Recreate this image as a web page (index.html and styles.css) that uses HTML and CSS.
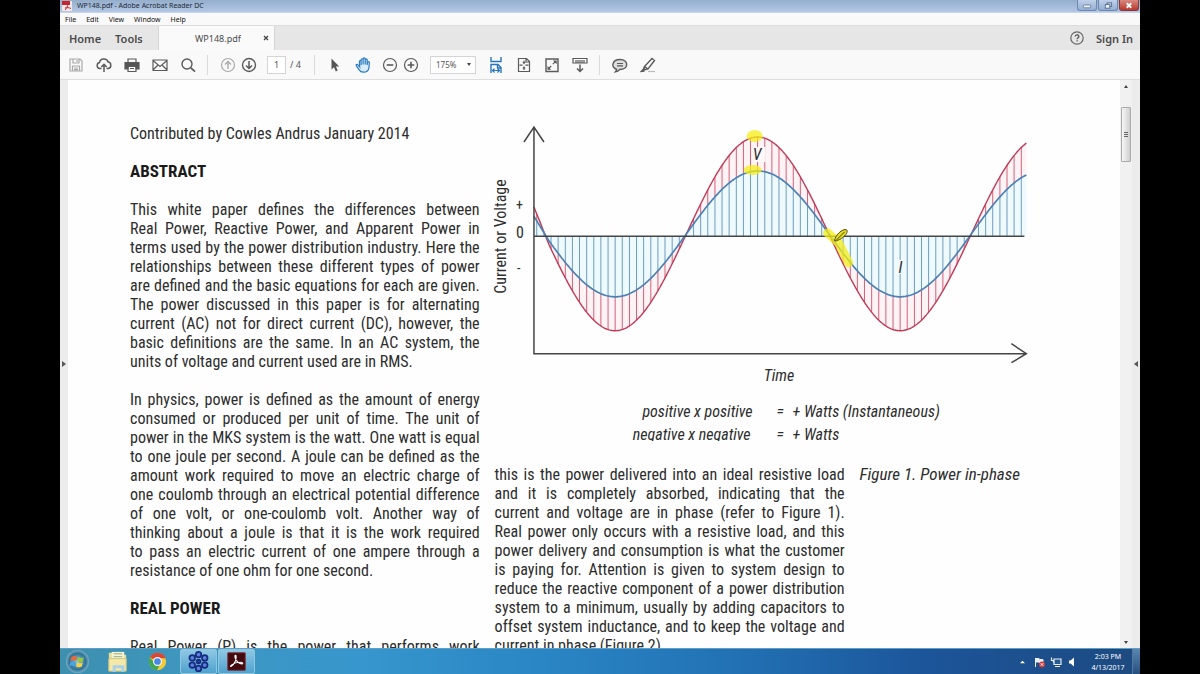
FILE: index.html
```html
<!DOCTYPE html>
<html lang="en">
<head>
<meta charset="utf-8">
<title>WP148.pdf - Adobe Acrobat Reader DC</title>
<link rel="stylesheet" href="styles.css">
</head>
<body>
<div class="screen">
  <header class="titlebar">
    <svg class="app-icon" viewBox="0 0 10 10"><rect width="10" height="10" rx="1" fill="#f3e9ea"/><path d="M0 0h8v4H0z" fill="#c5262c"/><path d="M3 9c2-2 3-4 2.500-6M3 7c2-.5 4-.5 6 .5" stroke="#c5262c" fill="none"/></svg>
    <span class="title">WP148.pdf - Adobe Acrobat Reader DC</span>
    <div class="win-buttons">
      <button class="win" aria-label="Minimize"><svg viewBox="0 0 20 10"><rect x="6" y="4.500" width="8" height="3" rx="1" fill="#eef4fb" stroke="#56698a" stroke-width=".8"/></svg></button>
      <button class="win" aria-label="Restore"><svg viewBox="0 0 20 10"><rect x="9" y="2" width="5" height="4" fill="#c9d8ee" stroke="#56698a"/><rect x="7" y="4" width="5" height="4" fill="#eef4fb" stroke="#56698a"/></svg></button>
      <button class="win win-close" aria-label="Close"><svg viewBox="0 0 20 10"><path d="M7.500 2.500l5 5M12.500 2.500l-5 5" stroke="#fff" stroke-width="2"/></svg></button>
    </div>
  </header>
  <nav class="menubar">
    <button>File</button><button>Edit</button><button>View</button><button>Window</button><button>Help</button>
  </nav>
  <div class="tabs">
    <div class="tabs-main"><button>Home</button><button>Tools</button></div>
    <div class="doc-tab"><button class="doc-name">WP148.pdf</button><button class="tab-close" aria-label="Close tab"><svg viewBox="0 0 6 6"><path d="M1 1l4 4M5 1L1 5" stroke="#444" stroke-width="1.300"/></svg></button></div>
    <div class="tabs-end">
      <button class="help" aria-label="Help"><svg viewBox="0 0 14 14"><circle cx="7" cy="7" r="6.200" fill="none" stroke="#666" stroke-width="1.200"/><path d="M5.200 5.600c0-2.400 3.700-2.400 3.700-.2 0 1.300-1.800 1.300-1.800 2.800M7.100 9.300v1.300" fill="none" stroke="#555" stroke-width="1.300"/></svg></button>
      <button>Sign In</button>
    </div>
  </div>
  <div class="toolbar">
    <button class="tool faded" aria-label="Save"><svg viewBox="0 0 16 16"><path d="M2 2h10l2 2v10H2zM5 2v4h6V2M4.500 14V9h7v5M6 11h4M6 12.700h4M9 3v2"/></svg></button>
    <button class="tool" aria-label="Upload"><svg viewBox="0 0 16 16"><path stroke-width="1.500" d="M5.500 11.500H3.800a3 3 0 0 1-.3-5.900c.6-4.500 7.600-4.800 8.600-.6 3.300 0 3.800 5.800.2 6.500H10.500M8 15V7.500M5.300 10L8 7.300l2.700 2.700"/></svg></button>
    <button class="tool" aria-label="Print"><svg viewBox="0 0 16 16"><path d="M1 5.500h14V12h-3V9.500H4V12H1z" fill="#555"/><path d="M4 5V2h8v3M4 9.500h8v5H4zM6 11.500h4"/></svg></button>
    <button class="tool" aria-label="Mail"><svg viewBox="0 0 16 16"><path d="M1 3h14v10.500H1zM1 3.500l7 6 7-6M1 13l5-5M15 13l-5-5"/></svg></button>
    <button class="tool" aria-label="Find"><svg viewBox="0 0 16 16"><circle cx="7" cy="7" r="5" stroke-width="1.400"/><path d="M10.800 10.800L15 14.700" stroke-width="1.800"/></svg></button>
    <span class="sep"></span>
    <button class="tool small faded" aria-label="Previous page"><svg viewBox="0 0 16 16"><circle cx="8" cy="8" r="6.500"/><path d="M8 12V4.500M5 7.500l3-3 3 3" stroke-width="1.400"/></svg></button>
    <button class="tool small" aria-label="Next page"><svg viewBox="0 0 16 16"><circle cx="8" cy="8" r="6.500" stroke-width="1.400"/><path d="M8 4v7.500M5 8.500l3 3 3-3" stroke-width="1.500"/></svg></button>
    <input class="page-no" type="text" value="1" aria-label="Page number"><span class="page-count">/ 4</span>
    <span class="sep sep-wide"></span>
    <button class="tool" aria-label="Select"><svg viewBox="0 0 16 16"><path d="M4.500 1.500v11l2.500-2.200 1.800 4.200 1.900-.9-1.800-4 3.300-.2z" fill="#555" stroke="none"/></svg></button>
    <button class="tool hand" aria-label="Hand"><svg viewBox="0 0 16 16"><path d="M4.700 10L3 7.800C2 6.800.6 7.600 1.400 8.900l2.900 4.300c1 1.500 2.200 2 4 2 3.700 0 5.400-1.500 5.700-5l.4-4.700c0-1.300-1.700-1.300-1.900 0L12.200 8V3c0-1.400-2-1.400-2 0v4.500V2c0-1.400-2.100-1.400-2.100 0v5.500V2.800c0-1.400-2-1.400-2 0V8 4.500c0-1.200-1.700-1.200-1.700 0z" fill="#d9ecfa"/></svg></button>
    <button class="tool small zoom-out" aria-label="Zoom out"><svg viewBox="0 0 16 16"><circle cx="8" cy="8" r="6.500"/><path d="M4.700 8h6.600" stroke-width="1.600"/></svg></button>
    <button class="tool small" aria-label="Zoom in"><svg viewBox="0 0 16 16"><circle cx="8" cy="8" r="6.500"/><path d="M4.700 8h6.600M8 4.700v6.600" stroke-width="1.600"/></svg></button>
    <label class="zoom"><select aria-label="Zoom level"><option>175%</option></select></label>
    <button class="tool blue" aria-label="Fit width"><svg viewBox="0 0 16 16"><path stroke-width="1.400" d="M3 0v4.500h10V0M3 16V7.500h7l3 3V16M9.500 7.500v3.500H13"/><path stroke-width="1.200" d="M4.500 13.500h7M6.500 11.500l-2 2 2 2M9.500 11.500l2 2-2 2"/></svg></button>
    <button class="tool" aria-label="Fit page"><svg viewBox="0 0 16 16"><path d="M2.500 1.500h8l3 3v10h-11zM10 1.500V5h3.500M8 3.500v3M8 13v-3M3.500 8.200h3M12.500 8.200h-3M7 5l1 1.500L9 5M7 11.500L8 10l1 1.500"/></svg></button>
    <button class="tool" aria-label="Full screen"><svg viewBox="0 0 16 16"><path stroke-width="1.400" d="M2 2h12v12.500H2z"/><path d="M8.800 7.200l3-3M7.200 9l-3 3"/><path d="M9 3.500h3.700v3.700zM3.500 9v3.700h3.700z" fill="#555" stroke="none"/></svg></button>
    <button class="tool" aria-label="Read mode"><svg viewBox="0 0 16 16"><path d="M1 1.500h14v4.500H1zM4 3v3M6 3v3M8 3v3M10 3v3M12 3v3"/><path stroke-width="1.500" d="M8 7.500v7M5 11.500l3 3 3-3"/></svg></button>
    <span class="sep sep-tight"></span>
    <button class="tool" aria-label="Comment"><svg viewBox="0 0 16 16"><path d="M8 2.500c-8.500 0-9 8.500-3.500 9.700 0 1.300-.4 2-1 2.600 2-.3 3.200-1.200 4.200-2.300C17 12.500 17 2.500 8 2.500z" fill="#ddd" stroke-width="1.400"/><path d="M5 6.500h6M5 8.800h6"/></svg></button>
    <button class="tool" aria-label="Highlight"><svg viewBox="0 0 16 16"><path d="M4.500 9.500l7.500-8 2.500 2-6.500 8.500-3 .8-1.300-1.200zM4.500 9.500L8 12" stroke-width="1.400"/><path d="M4 11.500L1 14.500l3-.3z" fill="#555"/><path d="M8 14.500h7" stroke="#bbb"/></svg></button>
  </div>

  <main class="viewer">
    <button class="pane pane-left" aria-label="Show navigation"></button>
    <article class="paper">
      <section class="column first">
        <p><span class="last">Contributed by Cowles Andrus January 2014</span></p>
        <h2>ABSTRACT</h2>
        <p><span>This white paper defines the differences between</span><span>Real Power, Reactive Power, and Apparent Power in</span><span>terms used by the power distribution industry. Here the</span><span>relationships between these different types of power</span><span>are defined and the basic equations for each are given.</span><span>The power discussed in this paper is for alternating</span><span>current (AC) not for direct current (DC), however, the</span><span>basic definitions are the same. In an AC system, the</span><span class="last">units of voltage and current used are in RMS.</span></p>
        <p><span>In physics, power is defined as the amount of energy</span><span>consumed or produced per unit of time. The unit of</span><span>power in the MKS system is the watt. One watt is equal</span><span>to one joule per second. A joule can be defined as the</span><span>amount work required to move an electric charge of</span><span>one coulomb through an electrical potential difference</span><span>of one volt, or one-coulomb volt. Another way of</span><span>thinking about a joule is that it is the work required</span><span>to pass an electric current of one ampere through a</span><span class="last">resistance of one ohm for one second.</span></p>
        <h2>REAL POWER</h2>
        <p><span>Real Power (P) is the power that performs work</span></p>
      </section>
      <section class="right">
        <figure class="chart">
          <svg id="chart" viewBox="486 120 544 268" role="img" aria-label="Voltage and current in phase">
            <g id="waves"></g>
            <g class="axis">
              <path d="M534 128v226h492M524 142l10-15 10 15M1012 344l15 10-15 9"/>
              <path d="M534 236.500h491"/>
            </g>
            <g class="marker">
              <ellipse cx="755" cy="136" rx="8" ry="6"/><ellipse cx="753" cy="170" rx="9" ry="5"/>
              <path d="M828 233l11 10 10 20" />
            </g>
            <path d="M835 241c0-5 8-13 12-11 3 3-6 11-12 11zM837 240l8-8" fill="#e5dc22" stroke="#4c4913"/>
            <rect x="753" y="147" width="13" height="15" fill="#fff8f9"/><rect x="898" y="260" width="6" height="14" fill="#effaff"/>
            <g class="label">
              <text class="it" x="753" y="160">V</text><text class="it" x="899" y="273">I</text>
              <text x="516" y="210" class="sign">+</text><text x="516" y="238">0</text><text x="517" y="273" class="sign">-</text>
              <text transform="translate(506 294) rotate(-90)">Current or Voltage</text>
              <text class="it" x="764" y="381">Time</text>
            </g>
          </svg>
        </figure>
        <div class="equations">
          <span>positive x positive</span><span class="eq">=</span><span>+ Watts (Instantaneous)</span>
          <span class="neg">negative x negative</span><span class="eq">=</span><span>+ Watts</span>
        </div>
        <div class="below">
          <p><span>this is the power delivered into an ideal resistive load</span><span>and it is completely absorbed, indicating that the</span><span>current and voltage are in phase (refer to Figure 1).</span><span>Real power only occurs with a resistive load, and this</span><span>power delivery and consumption is what the customer</span><span>is paying for. Attention is given to system design to</span><span>reduce the reactive component of a power distribution</span><span>system to a minimum, usually by adding capacitors to</span><span>offset system inductance, and to keep the voltage and</span><span class="last">current in phase (Figure 2).</span></p>
          <p class="caption">Figure 1. Power in-phase</p>
        </div>
      </section>
    </article>
    <div class="scrollbar">
      <button class="arrow up" aria-label="Scroll up"></button>
      <div class="thumb"><i></i><i></i><i></i></div>
      <button class="arrow down" aria-label="Scroll down"></button>
    </div>
    <button class="pane pane-right" aria-label="Show tools"></button>
  </main>

  <footer class="taskbar">
    <button class="task" aria-label="Start"><svg viewBox="0 0 26 26"><defs><radialGradient id="orb"><stop offset="0" stop-color="#8fd2ee"/><stop offset=".7" stop-color="#2d7296"/><stop offset="1" stop-color="#79abc4"/></radialGradient></defs><circle cx="13" cy="13" r="12" fill="url(#orb)"/><path d="M6.500 8.500c2-1.500 4-1.500 6-.3l-.8 4.200c-2-1-4-1-6 .2z" fill="#ec6a35"/><path d="M13.500 8.500c2 1 4 1.200 6 .1l-.9 4.300c-2 1-4 .8-6-.2z" fill="#9ac843"/><path d="M5.500 13.800c2-1.200 4-1.200 6-.2l-.9 4.200c-2-1-4-1-5.800.2z" fill="#4aa3e0"/><path d="M12.400 14c2 1 4 1.200 6 .1l-.9 4.200c-2 1-4 .8-6-.2z" fill="#fbd142"/></svg></button>
    <button class="task" aria-label="Explorer"><svg viewBox="0 0 26 26"><path d="M4 4h7l1 2h10v17H4z" fill="#e8dc94"/><path d="M7 3h13v8H7z" fill="#f7f4d5"/><path d="M9 5h9M9 8h9" stroke="#8cae7b"/><path d="M4 10h18v13H4z" fill="#f4e9a8" stroke="#d2c582"/><path d="M8 17h12v7h-3v-4h-6v4H8z" fill="#a9d2e8"/></svg></button>
    <button class="task" aria-label="Chrome"><svg viewBox="0 0 26 26"><circle cx="13" cy="13" r="9" fill="#f3ca3b"/><path d="M13 13L5.200 8.500A9 9 0 0 1 21.500 9.500H13z" fill="#dc4637"/><path d="M13 13l-3 1.500-4.800-6A9 9 0 0 0 12.500 22L16 15z" fill="#3fa757"/><circle cx="13" cy="13" r="4.600" fill="#fff"/><circle cx="13" cy="13" r="3.500" fill="#4688e6"/></svg></button>
    <button class="task open" aria-label="Meeting"><svg viewBox="0 0 26 26"><g fill="#5b7fe0" stroke="#162b7d" stroke-width="1.800"><circle cx="13" cy="5.800" r="2.900"/><circle cx="19.500" cy="9.300" r="2.900"/><circle cx="19.500" cy="16.700" r="2.900"/><circle cx="13" cy="20.200" r="2.900"/><circle cx="6.500" cy="16.700" r="2.900"/><circle cx="6.500" cy="9.300" r="2.900"/><circle cx="13" cy="13" r="2" fill="#2a47b0"/></g></svg></button>
    <button class="task open" aria-label="Acrobat Reader"><svg viewBox="0 0 26 26"><path d="M4 4h18v18H4z" fill="#430b10" stroke="#7a1d20"/><path d="M7.500 18c3-1.500 6-7.500 5-11-1-1.200-1.500.5-.8 2.500 1 3 4 6 7 6 1.500-.5.500-1.700-1.700-1.700-3 0-6.500.8-9 2.700-1.500 1.300-1.500 2-.5 1.500z" fill="none" stroke="#fff" stroke-width="1.200"/></svg></button>
    <div class="tray">
      <svg class="t-up" viewBox="0 0 6 4"><path d="M0 3.500L3 .5l3 3z" fill="#fff"/></svg>
      <svg class="t-icon" viewBox="0 0 12 12"><path d="M1.500 11V2M2 2.500h3l1 1h3V7H6L5 6H2z" fill="#e9eef5" stroke="#e9eef5"/><circle cx="8" cy="8.500" r="3" fill="#d43b3b"/><path d="M6.800 7.300l2.400 2.400M9.200 7.300L6.800 9.700" stroke="#fff"/></svg>
      <svg class="t-icon" viewBox="0 0 12 12"><path d="M4 3h7v5.500H4zM5 10.500h5M1.500 1.500v3h2v2" fill="#285a92" stroke="#e9eef5" stroke-width="1.200"/></svg>
      <svg class="t-icon" viewBox="0 0 12 12"><path d="M3 4.500h1.500L8 1.500v9l-3.500-3H3z" fill="#fff"/></svg>
      <div class="clock"><time>2:03 PM</time><time>4/13/2017</time></div>
      <button class="peek" aria-label="Show desktop"></button>
    </div>
  </footer>
</div>
<script src="chart.js"></script>
</body>
</html>
```
FILE: styles.css
```css
* { box-sizing: border-box; }
body { margin: 0; background: #000; font-family: "Noto Sans", sans-serif; color: #333; }
button { border: 0; padding: 0; margin: 0; background: none; font: inherit; color: inherit; }
svg { display: block; }
.screen { width: 90%; height: 100vh; margin: 0 auto; display: flex; flex-direction: column; overflow: hidden; background: #f8f8f8; }

.titlebar { flex: none; height: 13px; display: flex; align-items: center; padding-left: 2px; background: linear-gradient(#94aecb, #b3c8e6); border-bottom: 1px solid #c8d6e8; font-size: 7px; line-height: 12px; color: #1b2733; }
.app-icon { width: 10px; height: 10px; }
.title { margin-left: 5px; }
.win-buttons { display: flex; gap: 1px; margin-left: auto; align-self: flex-start; padding-right: 1px; }
.win { width: 20px; height: 11px; border: 1px solid #6f88ad; border-top: 0; border-radius: 0 0 3px 3px; background: linear-gradient(#bfd0e8, #94aed4); }
.win-close { border-color: #8a3a36; background: linear-gradient(#d98a80, #b9362d); }

.menubar { flex: none; height: 12px; display: flex; gap: 10px; padding-left: 5px; background: #f9f9f9; font-size: 7px; line-height: 13px; color: #111; }

.tabs { flex: none; height: 25px; display: flex; background: #e6e6e6; border-top: 1px solid #dcdcdc; font-size: 11px; font-weight: 600; color: #4b4b4b; }
.tabs-main { display: flex; gap: 14px; width: 99px; padding-left: 9px; border-right: 1px solid #d6d6d6; }
.doc-tab { display: flex; align-items: center; width: 116px; padding: 0 5px 0 36px; background: #fafafa; border-right: 1px solid #d6d6d6; }
.doc-name { font-size: 9px; font-weight: 400; }
.tab-close { margin-left: auto; width: 6px; height: 6px; }
.tabs-end { display: flex; align-items: center; gap: 12px; margin-left: auto; padding-right: 7px; }
.help svg { width: 14px; height: 14px; }

.toolbar { flex: none; height: 30px; display: flex; align-items: center; padding-left: 2px; background: #f9f9f9; border-bottom: 1px solid #dedede; font-size: 9px; color: #555; }
.tool { flex: none; width: 28px; height: 28px; display: flex; align-items: center; justify-content: center; color: #5b5b5b; }
.tool svg { width: 16px; height: 16px; fill: none; stroke: currentColor; stroke-width: 1.200; }
.small { width: 21px; }
.faded { color: #aaa; }
.hand { color: #2b7cc0; }
.blue { color: #2b76b8; }
.zoom-out { margin-left: 2px; }
.sep { width: 1px; height: 20px; margin: 0 9px 0 5px; background: #dadada; }
.sep-wide { margin: 0 6px 0 12px; }
.sep-tight { margin: 0 6px 0 5px; }
.page-no { width: 19px; height: 18px; margin-left: 8px; padding: 0; border: 1px solid #d4d4d4; background: #fff; text-align: center; font: 9px "Noto Sans", sans-serif; color: #555; }
.page-count { width: 12px; margin-left: 4px; white-space: nowrap; }
.zoom { display: flex; align-items: center; width: 46px; height: 18px; margin-left: 9px; padding-right: 4px; border: 1px solid #d4d4d4; background: #fff; }
.zoom select { flex: 1; min-width: 0; appearance: none; border: 0; padding: 0 0 0 5px; background: none; font: 8px "Noto Sans", sans-serif; color: #555; }
.zoom::after { content: ""; border: 2px solid transparent; border-top: 3px solid #444; border-bottom: 0; }
.zoom + .blue { margin-left: 6px; }

.viewer { flex: 1; min-height: 0; display: flex; background: #ececec; }
.pane { flex: none; width: 8px; display: flex; align-items: center; justify-content: center; background: #ececec; }
.pane::after { content: ""; border: 3px solid transparent; }
.pane-left::after { border-left: 4px solid #555; border-right: 0; }
.pane-right::after { border-right: 4px solid #555; border-left: 0; }
.paper { flex: 1; min-width: 0; overflow: hidden; display: flex; gap: 6px; padding: 44px 91px 0 62px; background: #fefefe; font-family: "Roboto Condensed", "Liberation Sans Narrow", "Roboto", sans-serif; font-size: 16px; line-height: 19px; color: #2d2d2d; }
.paper p, .paper h2 { margin: 0 0 19px; }
.paper h2 { font-size: 17px; line-height: 19px; color: #1a1a1a; }
.paper p span { display: block; white-space: nowrap; text-align: justify; text-align-last: justify; }
.paper p .last { text-align-last: left; }
.column { flex: 350 1 0; min-width: 0; }
.right { flex: 544 1 0; min-width: 0; margin-top: -4px; }
.chart { margin: 0; }
.chart svg { width: 100%; }
.axis { fill: none; stroke: #454545; stroke-width: 1.500; }
.marker { fill: #f4ee14; fill-opacity: .75; }
.marker path { fill: none; stroke: #f4ee14; stroke-opacity: .75; stroke-width: 9; stroke-linecap: round; stroke-linejoin: round; }
.label { font-size: 16px; fill: #2d2d2d; }
.label .it { font-style: italic; }
.label .sign { font-size: 14px; }
.blue-fill { fill: #effaff; }
.red-fill { fill: #fff3f6; }
.blue-line { fill: none; stroke: #4b82b4; stroke-width: 1.700; }
.red-line { fill: none; stroke: #c03a58; stroke-width: 1.400; }
.blue-hatch { stroke: #6c9dbd; }
.red-hatch { stroke: #cf6078; }
.equations { display: grid; grid-template-columns: 267px 26px 1fr; align-items: start; padding-top: 12px; line-height: 23px; font-style: italic; }
.equations span:nth-child(3n+1) { text-align: right; }
.equations .eq { padding-left: 24px; text-align: center; }
.equations .eq + span { padding-left: 14px; white-space: nowrap; }
.equations .neg { height: 18px; overflow: hidden; padding-right: 2px; }
.below { display: grid; grid-template-columns: 350px 1fr; gap: 15px; padding: 19px 0 0 9px; }
.caption { font-size: 17px; font-style: italic; white-space: nowrap; }

.scrollbar { flex: none; width: 12px; display: flex; flex-direction: column; align-items: center; background: #f1f1f1; }
.arrow { width: 12px; height: 12px; display: flex; align-items: center; justify-content: center; }
.arrow::after { content: ""; border: 2px solid transparent; }
.up::after { border-bottom: 3px solid #444; border-top: 0; }
.down::after { border-top: 3px solid #444; border-bottom: 0; }
.thumb { width: 10px; height: 55px; margin: 15px 0 auto; display: flex; flex-direction: column; align-items: center; justify-content: center; gap: 1px; border: 1px solid #aaa; border-radius: 1px; background: linear-gradient(90deg, #f7f7f7, #cfcfcf); }
.thumb i { width: 4px; height: 1px; background: #666; }

.taskbar { flex: none; height: 26px; display: flex; background: linear-gradient(90deg, #3d8fae 0, #3e97bf 12%, #3796cd 28%, #2a85c4 45%, #2272b5 62%, #1c559a 80%, #1d4a80 100%); border-top: 1px solid #5f9fc4; }
.task { flex: none; width: 34px; margin-right: 6px; display: flex; align-items: center; justify-content: center; }
.task svg { width: 25px; height: 25px; }
.task.open { width: 37px; margin-right: 1px; border: 1px solid #8ec6e0; border-radius: 2px; background: linear-gradient(#8fc8e4, #4fa2cf); }
.tray { display: flex; align-items: center; gap: 4px; margin-left: auto; color: #fff; font-size: 7px; line-height: 11px; }
.t-up { width: 5px; height: 4px; margin-right: 5px; }
.t-icon { width: 12px; height: 12px; }
.clock { display: flex; flex-direction: column; align-items: center; width: 40px; margin-left: 6px; }
.peek { width: 8px; height: 25px; border-left: 1px solid #55799f; background: linear-gradient(#5b86b0, #264f80); }
```
FILE: chart.js
```js
const MID = 234, AXIS = 236.5, START = 534, END = 1027;
const TROUGH = 615.3, PERIOD = 285.3, STEP = PERIOD / 40;
const wave = (amp, x) => {
  // the opening stretch falls a little more steeply than the rest
  const lead = x < 549 ? (549 - x) / 15 * amp * 0.06 : 0;
  return MID + amp * Math.cos(2 * Math.PI * (x - TROUGH) / PERIOD) - lead;
};
const current = x => wave(63, x);
const voltage = x => wave(97, x);
const trace = f => {
  const points = [];
  for (let x = START; x <= END; x += 1) points.push(x + "," + f(x).toFixed(1));
  return points;
};
const area = f => `M${START},${AXIS}L${trace(f).join("L")}L${END},${AXIS}Z`;
let blue = "", red = "";
for (let n = -11; n <= 57; n += 1) {
  const x = TROUGH + n * STEP;
  if (x < START + 1 || x > END) continue;
  blue += `M${x.toFixed(1)},${AXIS}V${current(x).toFixed(1)}`;
  red += `M${x.toFixed(1)},${current(x).toFixed(1)}V${voltage(x).toFixed(1)}`;
}
document.getElementById("waves").innerHTML =
  `<path class="red-fill" d="${area(voltage)}"/>` +
  `<path class="blue-fill" d="${area(current)}"/>` +
  `<path class="red-hatch" d="${red}"/><path class="blue-hatch" d="${blue}"/>` +
  `<path class="red-line" d="M${trace(voltage).join("L")}"/>` +
  `<path class="blue-line" d="M${trace(current).join("L")}"/>`;
```
